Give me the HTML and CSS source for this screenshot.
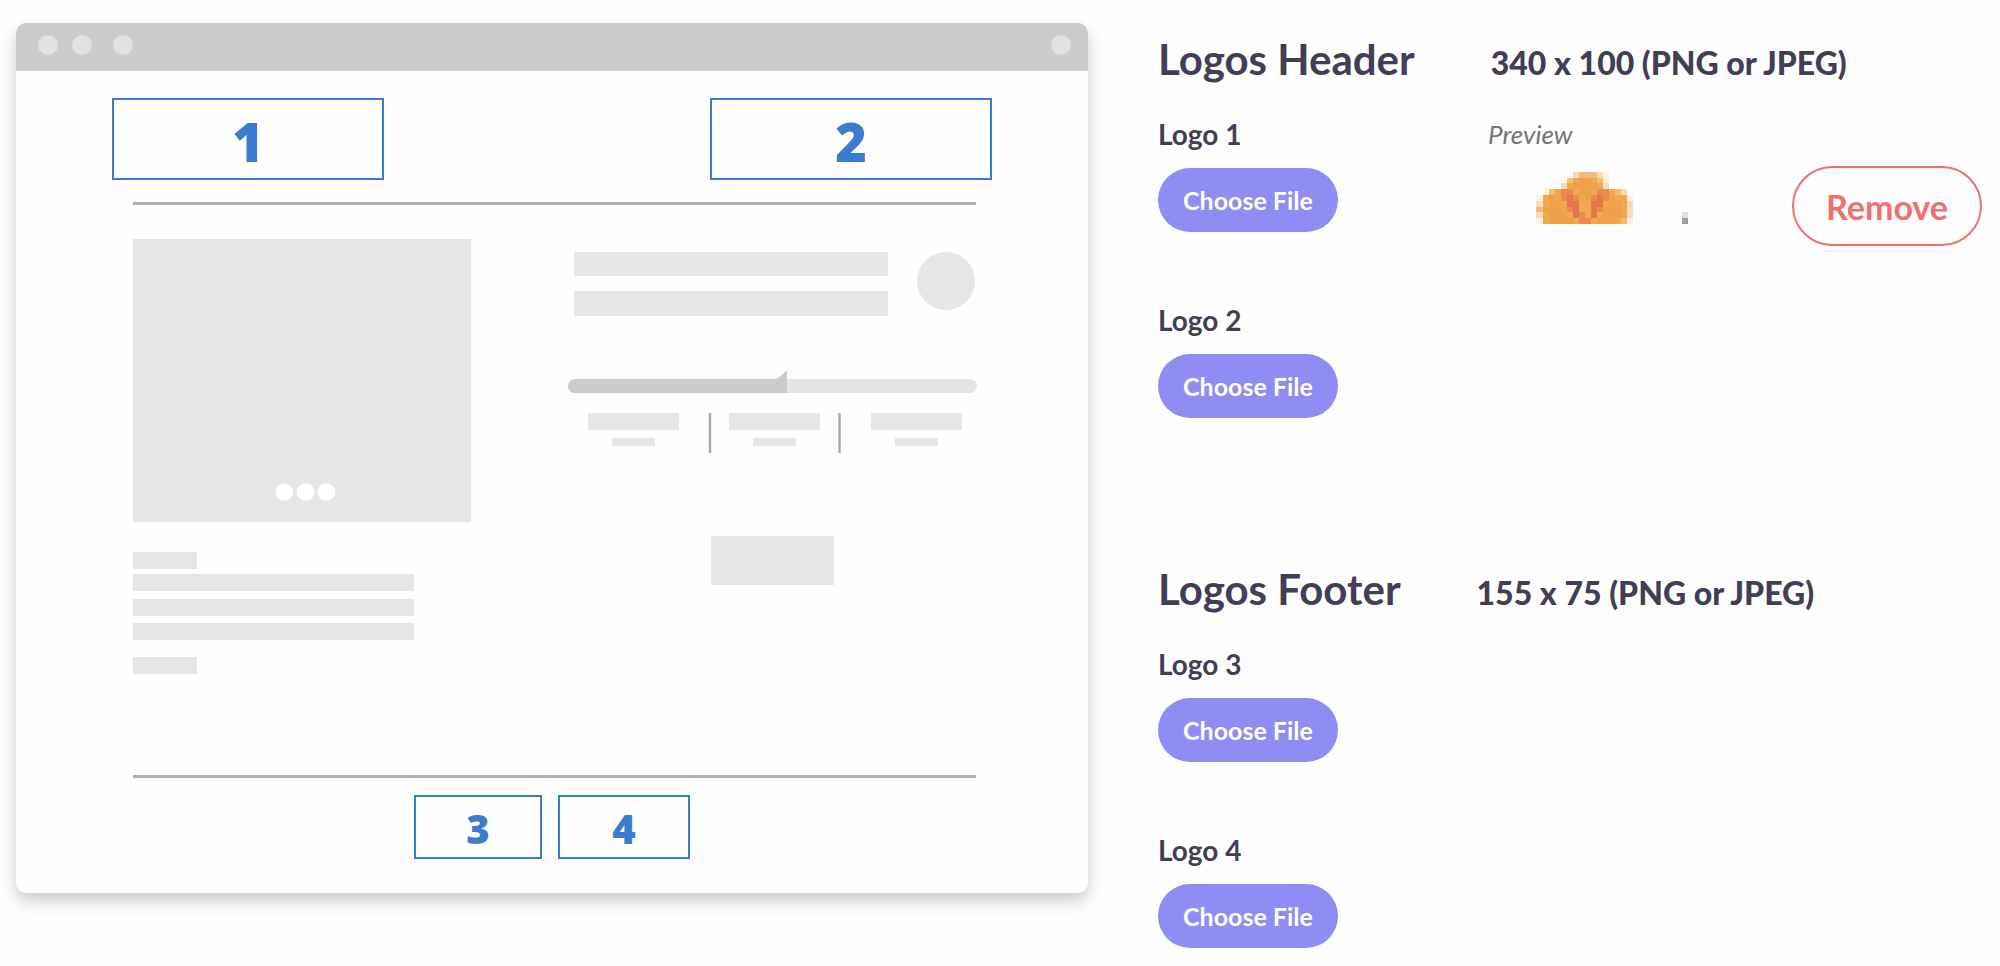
FILE: index.html
```html
<!DOCTYPE html>
<html lang="en">

<head>
    <meta charset="UTF-8">
    <meta name="viewport" content="width=device-width, initial-scale=1.0">
    <title>Logos</title>
    <link rel="stylesheet" href="styles.css">
</head>

<body>
    <main class="page">
        <!-- Page mockup -->
        <div class="mockup">
            <div class="titlebar">
                <span class="dot"></span>
                <span class="dot"></span>
                <span class="dot dot-spaced"></span>
                <span class="dot dot-right"></span>
            </div>
            <div class="slots slots-header">
                <div class="slot">1</div>
                <div class="slot slot-wide">2</div>
            </div>
            <hr class="rule">
            <svg class="wireframe" viewBox="0 0 843 570" aria-hidden="true">
                <g fill="#e6e6e6">
                    <rect x="0" y="34" width="338" height="283" />
                    <rect x="0" y="347" width="64" height="17" />
                    <rect x="0" y="369" width="281" height="17" />
                    <rect x="0" y="394" width="281" height="17" />
                    <rect x="0" y="418" width="281" height="17" />
                    <rect x="0" y="452" width="64" height="17" />
                    <rect x="441" y="47" width="314" height="24" />
                    <rect x="441" y="86" width="314" height="25" />
                    <circle cx="813" cy="76" r="29" />
                    <rect x="455" y="208" width="91" height="17" />
                    <rect x="596" y="208" width="91" height="17" />
                    <rect x="738" y="208" width="91" height="17" />
                    <rect x="479" y="233" width="43" height="8" />
                    <rect x="620" y="233" width="43" height="8" />
                    <rect x="762" y="233" width="43" height="8" />
                    <rect x="578" y="331" width="123" height="49" />
                </g>
                <g fill="#fff">
                    <circle cx="151.5" cy="287" r="8.8" />
                    <circle cx="172.5" cy="287" r="8.8" />
                    <circle cx="193.5" cy="287" r="8.8" />
                </g>
                <rect x="435" y="174" width="409" height="14" rx="7" fill="#e5e5e3" />
                <path d="M442 174H643Q650 170 654 165V188H442A7 7 0 0 1 442 174Z" fill="#cbcbc9" />
                <path d="M577 208V248M706.5 208V248" stroke="#a9a9a9" stroke-width="2.4" />
            </svg>
            <hr class="rule">
            <div class="slots slots-footer">
                <div class="slot">3</div>
                <div class="slot slot-wide">4</div>
            </div>
        </div>

        <!-- Logo uploads -->
        <div class="settings">
            <section class="group">
                <div class="group-title">
                    <h2>Logos Header</h2>
                    <h3>340 x 100 (PNG or JPEG)</h3>
                </div>
                <div class="logo-row">
                    <div class="upload">
                        <h4 id="logo1">Logo 1</h4>
                        <button class="btn-choose" type="button" aria-describedby="logo1">Choose File</button>
                    </div>
                    <div class="preview">
                        <em>Preview</em>
                        <svg class="preview-image" id="previewImage" viewBox="0 0 33 10" preserveAspectRatio="none" shape-rendering="crispEdges" role="img"></svg>
                    </div>
                    <button class="btn-remove" type="button">Remove</button>
                </div>
                <div class="logo-row">
                    <div class="upload">
                        <h4 id="logo2">Logo 2</h4>
                        <button class="btn-choose" type="button" aria-describedby="logo2">Choose File</button>
                    </div>
                </div>
            </section>

            <section class="group">
                <div class="group-title">
                    <h2>Logos Footer</h2>
                    <h3>155 x 75 (PNG or JPEG)</h3>
                </div>
                <div class="logo-row">
                    <div class="upload">
                        <h4 id="logo3">Logo 3</h4>
                        <button class="btn-choose" type="button" aria-describedby="logo3">Choose File</button>
                    </div>
                </div>
                <div class="logo-row">
                    <div class="upload">
                        <h4 id="logo4">Logo 4</h4>
                        <button class="btn-choose" type="button" aria-describedby="logo4">Choose File</button>
                    </div>
                </div>
            </section>
        </div>
    </main>

    <script src="script.js"></script>
</body>

</html>
```

FILE: styles.css
```css
* {
    box-sizing: border-box;
}

body {
    margin: 0;
    background-color: #fefefe;
    color: #413e56;
    font-family: Lato, "Open Sans", sans-serif;
}

h2,
h3,
h4 {
    margin: 0;
}

.page {
    display: flex;
    align-items: flex-start;
    gap: 70px;
    padding: 23px 18px 0 16px;
}

/* Page mockup */
.mockup {
    flex: 1;
    padding-bottom: 34px;
    border-radius: 10px;
    background-color: #fefefe;
    box-shadow: 0 8px 16px rgba(0, 0, 0, 0.2);
}

.titlebar {
    display: flex;
    gap: 14px;
    height: 48px;
    padding: 12px 17px 0 22px;
    border-radius: 10px 10px 0 0;
    background-color: #cccccc;
}

.dot {
    width: 20px;
    height: 20px;
    border-radius: 50%;
    background-color: #e2e2e2;
}

.dot-spaced {
    margin-left: 7px;
}

.dot-right {
    margin-left: auto;
}

.slots {
    display: flex;
}

.slot {
    display: flex;
    align-items: center;
    justify-content: center;
    border: 2px solid #3d7bcf;
    color: #3d7bcf;
    font-family: "Open Sans", Lato, sans-serif;
    font-weight: 800;
}

.slots-header {
    justify-content: space-between;
    padding: 27px 96px 22px;
}

.slots-header .slot {
    width: 272px;
    height: 82px;
    padding-top: 4px;
    font-size: 54px;
    line-height: 64px;
}

.slots-header .slot-wide {
    width: 282px;
}

.slots-footer {
    justify-content: center;
    gap: 16px;
    padding-top: 17px;
}

.slots-footer .slot {
    width: 128px;
    height: 64px;
    padding-top: 4px;
    font-size: 40px;
    line-height: 48px;
}

.slots-footer .slot-wide {
    width: 132px;
}

.rule {
    height: 3px;
    margin: 0 112px 0 117px;
    border: none;
    background-color: #b0b0b0;
}

.wireframe {
    display: block;
    width: calc(100% - 229px);
    margin-left: 117px;
    overflow: visible;
}

/* Logo uploads */
.settings {
    width: 824px;
}

.group + .group {
    margin-top: 121px;
}

.group-title {
    display: flex;
    align-items: baseline;
    gap: 76px;
    padding-top: 12px;
}

h2 {
    font-size: 42px;
    line-height: 48px;
}

h3 {
    font-size: 32px;
    font-weight: 900;
    line-height: 40px;
}

h4 {
    font-size: 28px;
    line-height: 36px;
}

.logo-row {
    display: flex;
    min-height: 163px;
    padding-top: 33px;
}

.logo-row + .logo-row {
    margin-top: 23px;
}

.upload {
    width: 330px;
}

button {
    border: none;
    font-family: inherit;
    font-weight: bold;
    cursor: pointer;
}

.btn-choose {
    display: block;
    width: 180px;
    height: 64px;
    margin-top: 16px;
    padding: 0;
    border-radius: 32px;
    background-color: #8f8cf3;
    color: #fff;
    font-size: 25px;
}

.preview em {
    display: block;
    color: #757575;
    font-size: 26px;
    line-height: 36px;
}

.preview-image {
    display: block;
    width: 200px;
    height: 58px;
    margin-top: 14px;
}

.btn-remove {
    width: 190px;
    height: 80px;
    margin: 50px 0 0 auto;
    padding: 0;
    border: 2px solid #f0706a;
    border-radius: 40px;
    background-color: transparent;
    color: #f0706a;
    font-size: 34px;
}
```

FILE: script.js
```js
// Preview logo, one character per pixel
const palette = {
    a: "#f8dcb8",
    b: "#f2bd78",
    c: "#f1a84e",
    o: "#eea04a",
    d: "#ea8a4c",
    r: "#e4774c",
    l: "#fdf3e4",
    g: "#e0e2e2",
    k: "#9c9ea0"
};

const rows = [
    "",
    "              abbbal",
    "             bcoocbl",
    "            acooooca",
    "         lbcddcoocddcba",
    "        lcocdrdcodrdoccl",
    "        acoocrrccrrcooca",
    "        booocdrccrdoooca",
    "        acooocrdcrcoooca        g",
    "        lcoooocddcooocbl        k"
];

const previewImage = document.getElementById("previewImage");

rows.forEach((row, y) => {
    [...row].forEach((char, x) => {
        if (!palette[char]) {
            return;
        }

        const rect = document.createElementNS("http://www.w3.org/2000/svg", "rect");
        rect.setAttribute("x", x);
        rect.setAttribute("y", y);
        rect.setAttribute("width", 1);
        rect.setAttribute("height", 1);
        rect.setAttribute("fill", palette[char]);
        previewImage.appendChild(rect);
    });
});
```
